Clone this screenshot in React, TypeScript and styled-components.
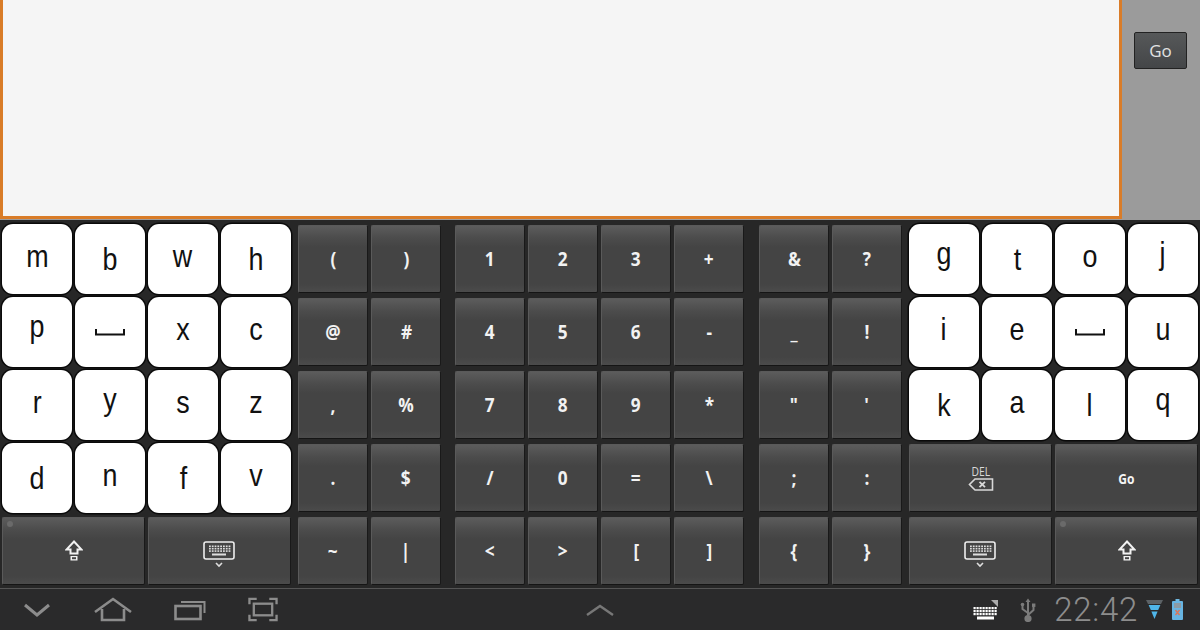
import React from "react";
import styled, { createGlobalStyle } from "styled-components";

const Global = createGlobalStyle`
  html, body { margin: 0; padding: 0; width: 1200px; height: 630px; overflow: hidden; background: #272727; }
`;

const Screen = styled.div`
  width: 1200px;
  height: 630px;
  display: flex;
  flex-direction: column;
  font-family: "Open Sans", "Liberation Sans", sans-serif;
`;
const Top = styled.div`
  height: 220px;
  display: flex;
  background: #9b9b9b;
`;
const TextBox = styled.div`
  width: 1122px;
  height: 219px;
  box-sizing: border-box;
  background: #f5f5f5;
  border: solid #d97c28;
  border-width: 0 3px 3px 3px;
`;
const Side = styled.div`
  flex: 1;
  padding: 32px 13px 0 12px;
`;
const GoButton = styled.button`
  width: 53px;
  height: 37px;
  padding: 0;
  border: 1px solid #222;
  border-radius: 2px;
  background: linear-gradient(#565859, #444648);
  color: #e2e2e2;
  font: 500 17px "Open Sans", sans-serif;
`;
const Keyboard = styled.div`
  height: 368px;
  box-sizing: border-box;
  padding: 4px 2px 0;
  display: flex;
  background: #272727;
`;
const Group = styled.div<{ $cols: number; $gap: number }>`
  display: grid;
  grid-template-columns: repeat(${(p) => p.$cols}, 70px);
  grid-template-rows: repeat(5, 70px);
  gap: 3px;
  margin-left: ${(p) => p.$gap}px;
`;
const LetterKey = styled.div`
  background: #fff;
  border-radius: 11px;
  box-shadow: 0 0 0 1.5px #0a0a0a;
  display: flex;
  align-items: center;
  justify-content: center;
  color: #111;
`;
const Letter = styled.span<{ $dy: number }>`
  font: 400 32px "Liberation Sans", Arial, sans-serif;
  transform: translateY(${(p) => p.$dy}px) scaleX(0.84);
`;
const DarkKey = styled.div<{ $wide?: boolean }>`
  position: relative;
  grid-column: span ${(p) => (p.$wide ? 2 : 1)};
  margin: 1px 0;
  display: flex;
  align-items: center;
  justify-content: center;
  box-sizing: border-box;
  background: linear-gradient(#5c5c5c 0, #4c4c4c 18%, #444 32%, #444 88%, #4b4b4b 100%);
  border: 1px solid #5a5a5a;
  border-bottom-color: #151515;
  border-right-color: #191919;
  border-radius: 2px;
  color: #f2f2f2;
`;
const Symbol = styled.span`
  font: 700 20px "Open Sans", sans-serif;
  transform: translateY(-1px) scaleX(0.86);
`;
const GoLabel = styled.span`
  font: 700 14px "Open Sans", sans-serif;
  color: #f4f4f4;
  transform: scaleX(0.86);
`;
const DelLabel = styled.div`
  display: flex;
  flex-direction: column;
  align-items: center;
  font: 400 12px/13px "Open Sans", sans-serif;
  color: #d8d8d8;
`;
const DelText = styled.span`
  transform: scaleX(0.86);
`;
const Led = styled.span`
  position: absolute;
  left: 4px;
  top: 3px;
  width: 6px;
  height: 6px;
  border-radius: 50%;
  background: #6a6a6a;
`;
const HideSvg = styled.svg`
  margin-top: 7px;
`;
const Nav = styled.div`
  height: 42px;
  display: grid;
  grid-template-columns: 563px 28px 1fr;
  align-items: center;
  background: #2a2a2b;
  border-top: 1px solid #555;
  box-sizing: border-box;
  padding: 0 17px 0 23px;
`;
const NavLeft = styled.div`
  display: flex;
  align-items: center;
  gap: 42px;
`;
const NavCenter = styled.div`
  display: flex;
`;
const NavRight = styled.div`
  display: flex;
  align-items: center;
  justify-content: flex-end;
`;
const Spacer = styled.span<{ $w: number }>`
  width: ${(p) => p.$w}px;
`;
const Clock = styled.span`
  font: 300 33px Roboto, sans-serif;
  color: #8d8d8d;
  margin: 0 8px 0 18px;
  letter-spacing: 0.7px;
`;

const ShiftIcon = () => (
  <svg width="18" height="22" viewBox="0 0 18 22" fill="none" stroke="#f2f2f2" strokeWidth="2">
    <path d="M9 1.5 L16.5 9.5 H12.5 V13.5 H5.5 V9.5 H1.5 Z" />
    <rect x="5.5" y="16" width="7" height="4.5" fill="#f2f2f2" stroke="none" />
    <rect x="7" y="17.2" width="4" height="2" fill="#444" stroke="none" />
  </svg>
);

const HideIcon = () => (
  <HideSvg width="33" height="27" viewBox="0 0 33 27" fill="none">
    <rect x="1" y="1" width="30" height="17" rx="2" stroke="#eee" strokeWidth="1.6" />
    {[0, 1, 2].map((r) =>
      Array.from({ length: 8 }).map((_, c) => (
        <rect key={`${r}-${c}`} x={6 + c * 2.8} y={4.5 + r * 2.4} width="1.8" height="1.6" fill="#ddd" />
      ))
    )}
    <rect x="9" y="12.5" width="14" height="2" fill="#ddd" />
    <path d="M13 22 L16 25 L19 22" stroke="#ddd" strokeWidth="1.6" />
  </HideSvg>
);

const DelIcon = () => (
  <svg width="26" height="13" viewBox="0 0 26 13" fill="none" stroke="#d8d8d8">
    <path d="M7 1 H24.5 V12 H7 L1.5 6.5 Z" strokeWidth="1.6" />
    <path d="M11.5 3.8 L17 9.2 M17 3.8 L11.5 9.2" strokeWidth="1.8" />
  </svg>
);

const SpaceIcon = () => (
  <svg width="30" height="7" viewBox="0 0 30 7" fill="none" stroke="#111" strokeWidth="2">
    <path d="M1 0 V5.5 H29 V0" />
  </svg>
);

const gray = "#8c8c8c";
const BackIcon = () => (
  <svg width="29" height="14" viewBox="0 0 29 14" fill="none" stroke={gray} strokeWidth="3">
    <path d="M2 2 L14 12 L26 2" />
  </svg>
);
const HomeIcon = () => (
  <svg width="38" height="25" viewBox="0 0 38 25" fill="none" stroke={gray} strokeWidth="2.6">
    <path d="M1 15 L19 2 L37 15" />
    <path d="M8 12 V23 H30 V12" />
  </svg>
);
const RecentIcon = () => (
  <svg width="32" height="22" viewBox="0 0 32 22" fill="none" stroke={gray} strokeWidth="2.6">
    <rect x="1.5" y="7" width="25" height="13" />
    <path d="M7 3 H30.5 V14" strokeWidth="2" />
  </svg>
);
const ShotIcon = () => (
  <svg width="30" height="25" viewBox="0 0 31 25" fill="none" stroke={gray} strokeWidth="2.4">
    <path d="M1.5 7 V1.5 H9 M22 1.5 H29.5 V7 M29.5 18 V23.5 H22 M9 23.5 H1.5 V18" />
    <rect x="6" y="6.5" width="19" height="12" />
  </svg>
);
const UpIcon = () => (
  <svg width="28" height="12" viewBox="0 0 28 12" fill="none" stroke="#777" strokeWidth="2.4">
    <path d="M1 11 L14 2 L27 11" />
  </svg>
);
const StatusKeyboard = () => (
  <svg width="25" height="22" viewBox="0 0 25 22" fill="#fff">
    <path d="M18 1 H25 V8 Z" fill="#aaa" />
    {[0, 1, 2].map((r) =>
      Array.from({ length: 8 }).map((_, c) => (
        <rect key={`${r}-${c}`} x={0.5 + c * 3} y={8 + r * 3} width="2.2" height="2.2" />
      ))
    )}
    <rect x="4" y="17.5" width="17" height="3" />
  </svg>
);
const UsbIcon = () => (
  <svg width="16" height="24" viewBox="0 0 16 24" fill="none" stroke="#7b7b7b" strokeWidth="2">
    <path d="M8 3 V20 M8 15 L2.5 11 V7 M8 17 L13.5 12 V8" />
    <circle cx="8" cy="20.5" r="2.6" fill="#7b7b7b" />
    <path d="M8 0.5 L10.5 4 H5.5 Z" fill="#7b7b7b" stroke="none" />
    <circle cx="2.5" cy="6.5" r="1.8" fill="#7b7b7b" stroke="none" />
    <rect x="12" y="5.5" width="3.4" height="3.4" fill="#7b7b7b" stroke="none" />
  </svg>
);
const WifiIcon = () => (
  <svg width="17" height="20" viewBox="0 0 17 20">
    <path d="M0 0 H17 L15 4 H2 Z" fill="#5c6266" />
    <path d="M2.6 5 H14.4 L12.2 10 H4.8 Z" fill="#4fb6ea" />
    <path d="M5.4 11.5 H11.6 L8.5 19 Z" fill="#4fb6ea" />
  </svg>
);
const BatteryIcon = () => (
  <svg width="11" height="21" viewBox="0 0 11 21">
    <rect x="3.5" y="0" width="4" height="2" fill="#6fb8e0" />
    <rect x="0" y="2" width="11" height="19" rx="1" fill="#67b4e2" />
    <rect x="2" y="4" width="7" height="5" fill="#8c9aa4" />
    <path d="M3.5 11 L7.5 16 M7.5 11 L3.5 16" stroke="#d9765a" strokeWidth="1.4" />
  </svg>
);

const ascenders = "bdfhklt";
const descenders = "gjpqy";
const offsetOf = (c: string) =>
  ascenders.includes(c) ? 0 : descenders.includes(c) ? -6.5 : -3;

const LetterCell = ({ k }: { k: string }) => (
  <LetterKey>
    {k === " " ? <SpaceIcon /> : <Letter $dy={offsetOf(k)}>{k}</Letter>}
  </LetterKey>
);

const sym = (s: string) =>
  s.split(" ").map((c) => (
    <DarkKey key={c}>
      <Symbol>{c}</Symbol>
    </DarkKey>
  ));
const letters = (rows: string[]) =>
  rows.join("").split("").map((c, i) => <LetterCell key={i} k={c} />);

const ShiftKey = () => (
  <DarkKey $wide>
    <Led />
    <ShiftIcon />
  </DarkKey>
);
const HideKey = () => (
  <DarkKey $wide>
    <HideIcon />
  </DarkKey>
);

export default function App() {
  return (
    <Screen>
      <Global />
      <Top>
        <TextBox />
        <Side>
          <GoButton>Go</GoButton>
        </Side>
      </Top>
      <Keyboard>
        <Group $cols={4} $gap={0}>
          {letters(["mbwh", "p xc", "rysz", "dnfv"])}
          <ShiftKey />
          <HideKey />
        </Group>
        <Group $cols={2} $gap={7}>
          {sym("( ) @ # , % . $ ~ |")}
        </Group>
        <Group $cols={4} $gap={14}>
          {sym("1 2 3 + 4 5 6 - 7 8 9 * / 0 = \\ < > [ ]")}
        </Group>
        <Group $cols={2} $gap={15}>
          {sym("& ? _ ! \" ' ; : { }")}
        </Group>
        <Group $cols={4} $gap={7}>
          {letters(["gtoj", "ie u", "kalq"])}
          <DarkKey $wide>
            <DelLabel>
              <DelText>DEL</DelText>
              <DelIcon />
            </DelLabel>
          </DarkKey>
          <DarkKey $wide>
            <GoLabel>Go</GoLabel>
          </DarkKey>
          <HideKey />
          <ShiftKey />
        </Group>
      </Keyboard>
      <Nav>
        <NavLeft>
          <BackIcon />
          <HomeIcon />
          <RecentIcon />
          <ShotIcon />
        </NavLeft>
        <NavCenter>
          <UpIcon />
        </NavCenter>
        <NavRight>
          <StatusKeyboard />
          <Spacer $w={22} />
          <UsbIcon />
          <Clock>22:42</Clock>
          <WifiIcon />
          <Spacer $w={9} />
          <BatteryIcon />
        </NavRight>
      </Nav>
    </Screen>
  );
}
